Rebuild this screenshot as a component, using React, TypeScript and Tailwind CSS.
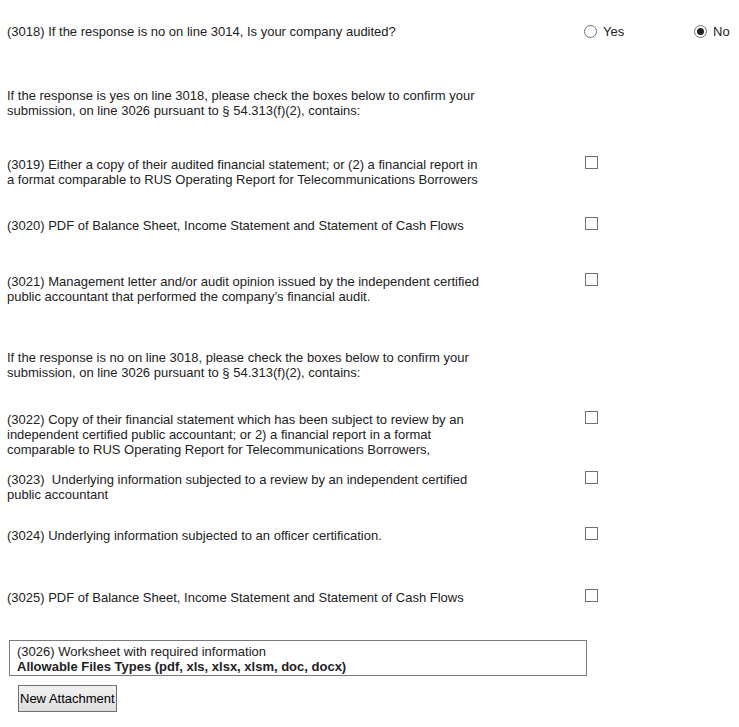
import React from "react";

// Square checkbox drawn with borders, like the old IE form control
const Box = () => (
  <span className="block -mt-[1px] w-[13px] h-[13px] border border-[#707070] bg-white" />
);

const Radio = ({ checked }: { checked?: boolean }) => (
  <span className="flex items-center justify-center w-[13px] h-[13px] rounded-full border border-[#707070] bg-white">
    {checked && <span className="block w-[7px] h-[7px] rounded-full bg-[#222]" />}
  </span>
);

type Row = { mt: string; text: React.ReactNode; box?: boolean };

const rows: Row[] = [
  {
    mt: "mt-[49px]",
    text: (
      <>
        If the response is yes on line 3018, please check the boxes below to confirm your
        <br />
        submission, on line 3026 pursuant to § 54.313(f)(2), contains:
      </>
    ),
  },
  {
    mt: "mt-[39px]",
    box: true,
    text: (
      <>
        (3019) Either a copy of their audited financial statement; or (2) a financial report in
        <br />
        a format comparable to RUS Operating Report for Telecommunications Borrowers
      </>
    ),
  },
  {
    mt: "mt-[31px]",
    box: true,
    text: <>(3020) PDF of Balance Sheet, Income Statement and Statement of Cash Flows</>,
  },
  {
    mt: "mt-[41px]",
    box: true,
    text: (
      <>
        (3021) Management letter and/or audit opinion issued by the independent certified
        <br />
        public accountant that performed the company’s financial audit.
      </>
    ),
  },
  {
    mt: "mt-[46px]",
    text: (
      <>
        If the response is no on line 3018, please check the boxes below to confirm your
        <br />
        submission, on line 3026 pursuant to § 54.313(f)(2), contains:
      </>
    ),
  },
  {
    mt: "mt-[32px]",
    box: true,
    text: (
      <>
        (3022) Copy of their financial statement which has been subject to review by an
        <br />
        independent certified public accountant; or 2) a financial report in a format
        <br />
        comparable to RUS Operating Report for Telecommunications Borrowers,
      </>
    ),
  },
  {
    mt: "mt-[15px]",
    box: true,
    text: (
      <>
        (3023)&nbsp; Underlying information subjected to a review by an independent certified
        <br />
        public accountant
      </>
    ),
  },
  {
    mt: "mt-[26px]",
    box: true,
    text: <>(3024) Underlying information subjected to an officer certification.</>,
  },
  {
    mt: "mt-[47px]",
    box: true,
    text: <>(3025) PDF of Balance Sheet, Income Statement and Statement of Cash Flows</>,
  },
];

export default function App() {
  return (
    <div className="min-h-screen bg-white text-[#222] text-[13px] leading-[15px] font-['Liberation_Sans',Arial,sans-serif] pl-[7px]">
      <div className="flex flex-col pt-[24px]">
        {/* (3018) audited question */}
        <div className="flex items-start">
          <div className="w-[577px] shrink-0">
            (3018) If the response is no on line 3014, Is your company audited?
          </div>
          <label className="flex items-center gap-[6px] w-[110px] shrink-0">
            <Radio />
            <span>Yes</span>
          </label>
          <label className="flex items-center gap-[6px]">
            <Radio checked />
            <span>No</span>
          </label>
        </div>

        {rows.map((r, i) => (
          <div key={i} className={`flex items-start ${r.mt}`}>
            <div className="w-[578px] shrink-0 whitespace-nowrap">{r.text}</div>
            {r.box && <Box />}
          </div>
        ))}

        {/* (3026) attachment */}
        <div className="mt-[35px] ml-[2px] w-[578px] h-[36px] border border-[#7a7a7a] px-[7px] pt-[3px] leading-[15px]">
          <div>(3026) Worksheet with required information</div>
          <div className="font-bold">Allowable Files Types (pdf, xls, xlsx, xlsm, doc, docx)</div>
        </div>

        <div className="mt-[9px] ml-[11px]">
          <button className="h-[27px] px-[1px] border border-[#707070] bg-gradient-to-b from-[#f2f2f2] to-[#dddddd] text-[13px] text-black leading-none">
            New Attachment
          </button>
        </div>
      </div>
    </div>
  );
}
